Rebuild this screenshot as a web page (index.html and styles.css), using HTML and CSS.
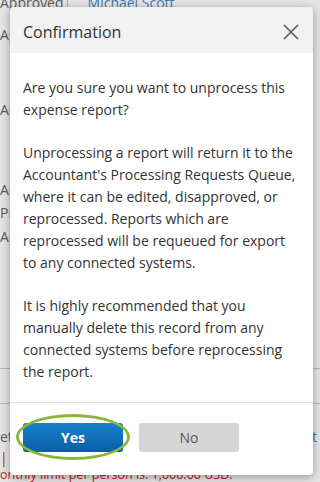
FILE: index.html
```html
<!DOCTYPE html>
<html lang="en">
<head>
    <meta charset="UTF-8">
    <meta name="viewport" content="width=device-width, initial-scale=1.0">
    <title>Confirmation</title>
    <link rel="stylesheet" href="styles.css">
</head>
<body>

    <div class="page">
        <div class="row row-first">
            <span class="cell status">Approved</span>
            <span class="cell name">Michael Scott</span>
        </div>
        <div class="row row-a"><span class="cell clip">Ap</span></div>
        <div class="row row-b"><span class="cell clip">Ap</span></div>
        <div class="row row-c"><span class="cell clip">Ap</span></div>
        <div class="row row-d"><span class="cell clip">Pr</span></div>
        <div class="row row-e"><span class="cell clip">Ap</span></div>
        <div class="rule rule-1"></div>
        <div class="rule rule-2"></div>
        <div class="row row-f"><span class="cell clip tail">et</span><span class="cell link">t</span></div>
        <div class="row row-g"><span class="cell warn">| S</span></div>
        <div class="row row-h"><span class="cell warn small">onthly limit per person is: 1,000.00 USD.</span></div>
    </div>

    <div class="shade"></div>

    <div class="modal">
        <div class="modal-header">
            <span class="modal-title">Confirmation</span>
            <span class="close">
                <svg width="16" height="16" viewBox="0 0 16 16">
                    <path d="M1 1 L15 15 M15 1 L1 15" stroke="#5a5a5a" stroke-width="1.6" fill="none"/>
                </svg>
            </span>
        </div>
        <div class="modal-body">
            <p>Are you sure you want to unprocess this expense report?</p>
            <p>Unprocessing a report will return it to the Accountant's Processing Requests Queue, where it can be edited, disapproved, or reprocessed. Reports which are reprocessed will be requeued for export to any connected systems.</p>
            <p>It is highly recommended that you manually delete this record from any connected systems before reprocessing the report.</p>
        </div>
        <div class="modal-footer">
            <div class="yes-wrap">
                <button class="btn btn-yes">Yes</button>
                <span class="highlight"></span>
            </div>
            <button class="btn btn-no">No</button>
        </div>
    </div>

</body>
</html>
```

FILE: styles.css
```css
html, body {
    margin: 0;
    padding: 0;
}
body {
    font-family: "Open Sans", "Liberation Sans", Arial, sans-serif;
    background: #fff;
    width: 320px;
    height: 482px;
    overflow: hidden;
    position: relative;
}

/* page behind the dialog */
.page {
    font-size: 14px;
    color: #666;
}
.row {
    display: flex;
    height: 22px;
    line-height: 22px;
    white-space: nowrap;
}
.row-first { margin-top: -8px; }
.row-first .status { border-right: 1px solid #bbb; padding-right: 3px; }
.row-first .name { margin-left: 20px; color: #4a86c8; }
.cell { display: inline-block; }
.clip { width: 10px; overflow: hidden; }
.tail { width: 11px; }
.row-a { margin-top: 10px; }
.row-b { margin-top: 53px; }
.row-c { margin-top: 58px; }
.row-d { margin-top: 1px; }
.row-e { margin-top: 2px; }
.rule { height: 1px; background: #ccc; }
.rule-1 { margin-top: 120px; }
.rule-2 { margin-top: 34px; }
.row-f { margin-top: 22px; justify-content: space-between; }
.row-f .link { color: #4a86c8; padding-right: 3px; }
.row-g { margin-top: -1px; }
.warn { color: #d42020; }
.small { font-size: 12.5px; }
.row-h { margin-top: -5px; }

.shade {
    position: absolute;
    inset: 0;
    background: rgba(0, 0, 0, 0.1);
}

/* dialog */
.modal {
    position: absolute;
    top: 7px;
    left: 10px;
    width: 303px;
    height: 468px;
    background: #fff;
    border-radius: 4px;
    box-shadow: 0 2px 10px rgba(0, 0, 0, 0.35);
    overflow: hidden;
    color: #333;
}
.modal-header {
    height: 46px;
    box-sizing: border-box;
    padding: 3px 13px 0;
    background: #f2f2f2;
    display: flex;
    align-items: center;
    justify-content: space-between;
}
.modal-title {
    font-size: 16px;
}
.close {
    display: flex;
    margin-right: 1px;
}
.modal-body {
    padding: 24px 13px 19px;
    font-size: 14px;
    line-height: 22px;
    height: 306px;
}
.modal-body p { margin: 0 0 21px; }
.modal-body p:last-child { margin-bottom: 0; }
.modal-footer {
    border-top: 1px solid #e2e2e2;
    padding: 20px 13px;
    display: flex;
    gap: 16px;
}
.yes-wrap { position: relative; }
.btn {
    width: 100px;
    height: 29px;
    border: none;
    border-radius: 3px;
    font-family: inherit;
    font-size: 14px;
}
.btn-yes {
    background: linear-gradient(#1681cc, #0a5fa6);
    color: #fff;
    font-weight: bold;
}
.btn-no {
    background: #d6d6d6;
    color: #555;
}
.highlight {
    position: absolute;
    left: -7px;
    top: -9px;
    width: 108px;
    height: 40px;
    border: 3px solid #8cb63a;
    border-radius: 50%;
}
```
